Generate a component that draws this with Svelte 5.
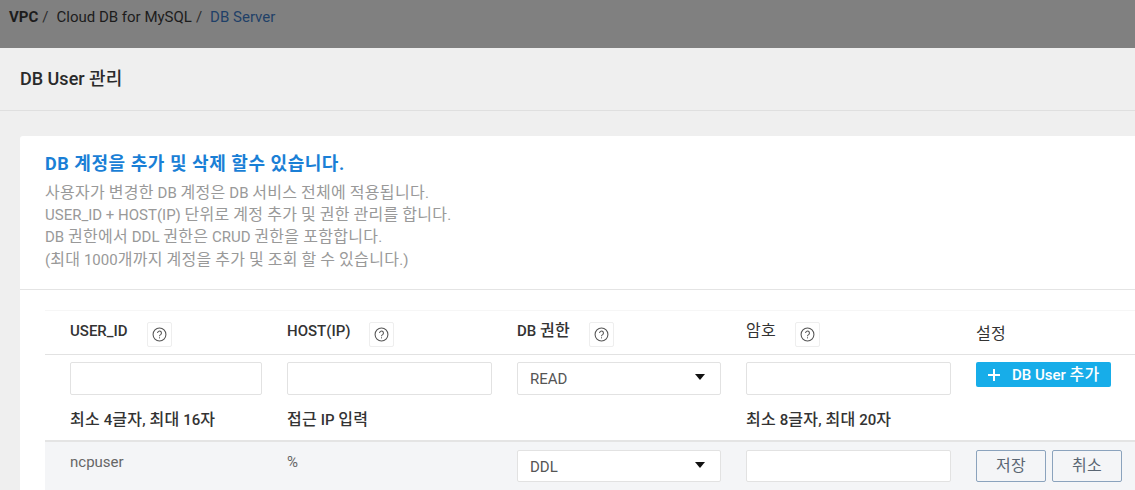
<script>
  const hints = ['최소 4글자, 최대 16자', '접근 IP 입력', '', '최소 8글자, 최대 20자', ''];
  const lines = [
    '사용자가 변경한 DB 계정은 DB 서비스 전체에 적용됩니다.',
    'USER_ID + HOST(IP) 단위로 계정 추가 및 권한 관리를 합니다.',
    'DB 권한에서 DDL 권한은 CRUD 권한을 포함합니다.',
    '(최대 1000개까지 계정을 추가 및 조회 할 수 있습니다.)'
  ];
  const runs = (text) => text.split(/([가-힣]+)/);
</script>

{#snippet mixed(text)}{#each runs(text) as run, i}{#if i % 2}<span class="ko">{run}</span>{:else}{run}{/if}{/each}{/snippet}

<div class="page">
  <nav class="crumbs">
    <b>VPC</b><span class="sep">/</span><span>Cloud DB for MySQL</span><span class="sep">/</span><span class="current">DB Server</span>
  </nav>
  <h1 class="title">DB User 관리</h1>
  <main class="content">
    <section class="card">
      <div class="banner">
        <h2>DB 계정을 추가 및 삭제 할수 있습니다.</h2>
        {#each lines as line}<p>{@render mixed(line)}</p>{/each}
      </div>
      <div class="table">
        <div class="row head">
          {#each ['USER_ID', 'HOST(IP)', 'DB 권한', '암호'] as h, i}
            <div class="th" class:w4={i === 3}>
              <span>{@render mixed(h)}</span>
              <button class="help" aria-label="도움말">
                <svg width="15" height="15" viewBox="0 0 14 14" fill="none" stroke="#555" stroke-width="1">
                  <circle cx="7" cy="7" r="6" />
                  <path d="M5.2 5.6a1.8 1.8 0 1 1 2.8 1.5c-.7.4-1 .8-1 1.5" />
                  <path d="M7 9.6v1" />
                </svg>
              </button>
            </div>
          {/each}
          <div class="th setting">{@render mixed('설정')}</div>
        </div>
        <div class="row add">
          <input class="field" />
          <input class="field" />
          <div class="select"><span>READ</span><i></i></div>
          <input class="field" />
          <button class="primary">
            <svg width="14" height="14" viewBox="0 0 14 14" stroke="#fff" stroke-width="2"><path d="M7 1v12M1 7h12" /></svg>
            <span>{@render mixed('DB User 추가')}</span>
          </button>
        </div>
        <div class="row hints">
          {#each hints as h}<div>{@render mixed(h)}</div>{/each}
        </div>
        <div class="row user">
          <div class="cell">ncpuser</div>
          <div class="cell">%</div>
          <div class="select"><span>DDL</span><i></i></div>
          <input class="field" />
          <div class="actions">
            <button class="ghost">{@render mixed('저장')}</button>
            <button class="ghost">{@render mixed('취소')}</button>
          </div>
        </div>
      </div>
    </section>
  </main>
</div>

<style>
  :global(body) {
    margin: 0;
    overflow: hidden;
  }
  .page {
    width: 1135px;
    height: 490px;
    overflow: hidden;
    background: #efefef;
    font-family: Roboto, "Noto Sans CJK KR", sans-serif;
    color: #333;
  }
  .ko {
    font-size: 16px;
    letter-spacing: 0.3px;
  }
  .crumbs {
    height: 48px;
    box-sizing: border-box;
    background: #808080;
    padding: 7px 0 0 9px;
    font-size: 15px;
    line-height: 20px;
    color: #1c1c1c;
    display: flex;
  }
  .crumbs b {
    font-weight: 700;
  }
  .sep {
    margin: 0 8px 0 4px;
    color: #2c2c2c;
  }
  .current {
    color: #1f4068;
  }
  .title {
    margin: 0;
    height: 63px;
    box-sizing: border-box;
    border-bottom: 1px solid #dfdfdf;
    padding-left: 20px;
    font-size: 18px;
    font-weight: 500;
    line-height: 62px;
    color: #2a2a2a;
  }
  .content {
    padding: 25px 0 0 20px;
  }
  .card {
    background: #fff;
    border-radius: 3px 0 0 0;
    height: 400px;
  }
  .banner {
    height: 154px;
    box-sizing: border-box;
    padding: 16px 0 0 25px;
    border-bottom: 1px solid #e4e4e4;
  }
  .banner h2 {
    margin: 0 0 6px;
    font-size: 18px;
    line-height: 24px;
    font-weight: 700;
    letter-spacing: 0.55px;
    color: #1a7fd6;
  }
  .banner p {
    margin: 0;
    font-size: 15px;
    line-height: 22.2px;
    color: #999;
  }
  .table {
    margin: 20px 0 0 25px;
    border-top: 1px solid #f6f6f6;
  }
  .row {
    display: grid;
    grid-template-columns: 192px 205px 204px 205px 1fr;
    column-gap: 25px;
    padding-left: 25px;
  }
  .head {
    height: 44px;
    box-sizing: border-box;
    border-bottom: 1px solid #e2e2e2;
    font-size: 15px;
  }
  .th {
    display: flex;
    font-weight: 500;
    color: #333;
    line-height: 20px;
    padding-top: 10px;
    box-sizing: border-box;
  }
  .help {
    width: 25px;
    height: 25px;
    margin: 1px 0 0 19px;
    padding: 0;
    background: #fff;
    border: 1px solid #eee;
    border-radius: 2px;
    display: flex;
    align-items: center;
    justify-content: center;
  }
  .w4 {
    font-weight: 400;
  }
  .setting {
    font-weight: 400;
    padding-top: 13px;
  }
  .add {
    padding-top: 7px;
    height: 33px;
    align-items: start;
  }
  .field, .select {
    height: 33px;
    box-sizing: border-box;
    border: 1px solid #e2e2e2;
    border-radius: 2px;
    background: #fff;
    width: 100%;
    margin: 0;
  }
  .select {
    display: flex;
    align-items: center;
    justify-content: space-between;
    padding: 1px 15px 0 12px;
    font-size: 15px;
    color: #555;
  }
  .select i {
    width: 0;
    height: 0;
    border-left: 5.5px solid transparent;
    border-right: 5.5px solid transparent;
    border-top: 6px solid #111;
    margin-top: -4px;
  }
  .primary {
    width: 135px;
    height: 25px;
    padding: 0 0 0 11px;
    border: 0;
    border-radius: 2px;
    background: #17ade9;
    color: #fff;
    font: 500 15px/25px Roboto, "Noto Sans CJK KR", sans-serif;
    display: flex;
    align-items: center;
    gap: 11px;
  }
  .hints {
    height: 47px;
    border-bottom: 2px solid #e4e4e4;
    font-size: 15px;
    font-weight: 500;
    line-height: 20px;
    color: #333;
    padding-top: 15px;
    box-sizing: border-box;
  }
  .user {
    background: #f4f5f7;
    padding-top: 8px;
    height: 48px;
    box-sizing: border-box;
    align-items: start;
  }
  .cell {
    font-size: 15px;
    color: #666;
    line-height: 20px;
    padding-top: 2px;
  }
  .user .field, .user .select {
    height: 32px;
  }
  .actions {
    display: flex;
    gap: 6px;
  }
  .ghost {
    width: 70px;
    height: 32px;
    padding: 0;
    background: #f4f5f7;
    border: 1px solid #8ba3bd;
    border-radius: 2px;
    color: #5a6673;
    font: 400 15px/30px Roboto, "Noto Sans CJK KR", sans-serif;
  }
</style>
